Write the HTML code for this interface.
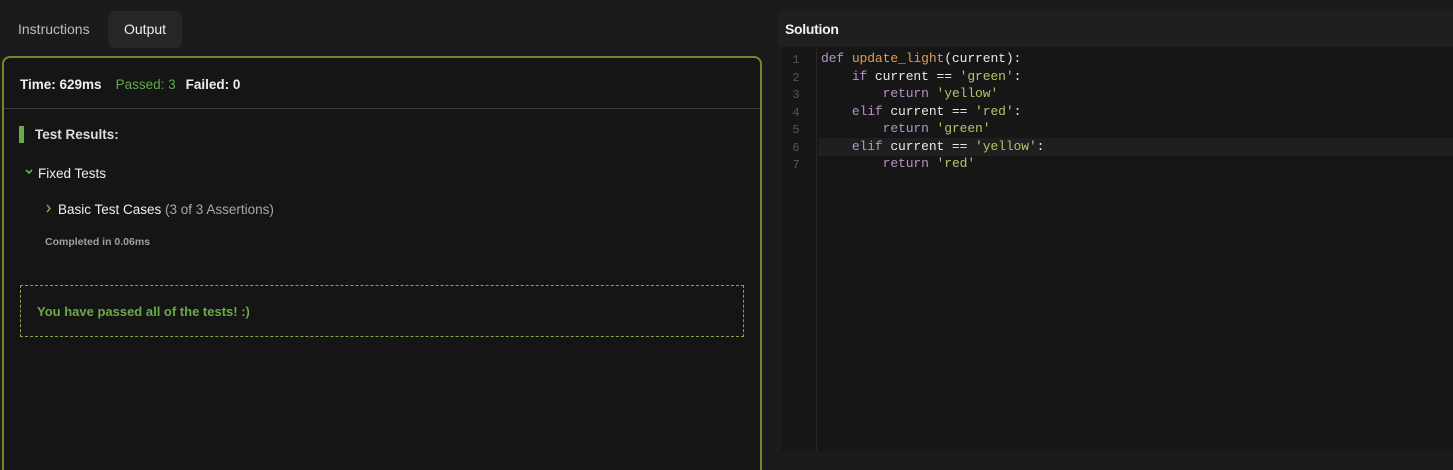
<!DOCTYPE html>
<html><head><meta charset="utf-8"><style>
*{box-sizing:border-box;margin:0;padding:0}
html{width:1453px;height:470px;overflow:hidden}
body{width:1453px;height:470px;background:#1b1b1d;font-family:"Liberation Sans",sans-serif;position:relative;overflow:hidden;color:#e6e6e6}
.tab{position:absolute;top:11px;height:37px;line-height:37px;font-size:14px;padding:0 16px;border-radius:6px}
#t1{left:2px;color:#bdbdbd}
#t2{left:108px;background:#262628;color:#eee}
#panel{position:absolute;left:2px;top:56px;width:760px;height:430px;background:#151515;border:2px solid #6d8b2c;border-radius:8px}
#stats{position:absolute;left:16px;top:19px;font-size:13.5px;font-weight:bold;color:#eee}
#stats .p{color:#5fa84a;font-weight:normal;margin:0 10px 0 14px}
#hr{position:absolute;left:0;right:0;top:50px;border-top:1px solid #3a3a3a}
#bar{position:absolute;left:15px;top:68px;width:5px;height:17px;background:#6aaa4b}
#tr{position:absolute;left:31px;top:69px;font-size:13.5px;font-weight:bold;color:#ddd}
#ft{position:absolute;left:34px;top:108px;font-size:13.5px;color:#eee}
svg.c{position:absolute}
#btc{position:absolute;left:54px;top:144px;font-size:13.5px;color:#eee}
#btc span{color:#a8a8a8;font-size:13.5px}
#comp{position:absolute;left:41px;top:178px;font-size:10.5px;font-weight:bold;color:#a0a0a0}
#pass{position:absolute;left:16px;top:227px;width:724px;height:52px;border:1px dashed #7fa64f;}
#pass div{position:absolute;left:16px;top:18px;font-size:13px;font-weight:bold;color:#6aaa4b}
#sol{position:absolute;left:778px;top:11px;width:675px;height:36px;background:#1f1f21;border-radius:6px 0 0 0;font-size:14px;font-weight:bold;line-height:36px;padding-left:7px;color:#f0f0f0;letter-spacing:-.3px}
#ed{position:absolute;left:781px;top:47px;width:672px;height:404px;background:#161616}
#gut{position:absolute;left:0;top:0;width:36px;height:100%;border-right:1px solid #262626}
.ln{position:absolute;left:0;width:30px;text-align:center;font:12px "Liberation Mono",monospace;color:#555}
.cl{position:absolute;left:40px;font:13px/17.5px "Liberation Mono",monospace;white-space:pre;color:#e8e8e8;letter-spacing:-.1px}
#hl{position:absolute;left:37px;right:0;top:91px;height:18px;background:#1f1f1f}
.k{color:#b693c9}.f{color:#e49a55}.s{color:#b6c468}
</style></head><body>
<div class="tab" id="t1">Instructions</div>
<div class="tab" id="t2">Output</div>
<div id="panel">
<div id="stats">Time: 629ms<span class="p">Passed: 3</span>Failed: 0</div>
<div id="hr"></div>
<div id="bar"></div><div id="tr">Test Results:</div>
<svg class="c" style="left:21px;top:111px" width="8" height="6" viewBox="0 0 8 6"><path d="M1 1L4 4L7 1" stroke="#6aaa4b" stroke-width="1.6" fill="none"/></svg>
<div id="ft">Fixed Tests</div>
<svg class="c" style="left:42px;top:146px" width="6" height="9" viewBox="0 0 6 9"><path d="M1 1L4 4.5L1 8" stroke="#6aaa4b" stroke-width="1.6" fill="none"/></svg>
<div id="btc">Basic Test Cases <span>(3 of 3 Assertions)</span></div>
<div id="comp">Completed in 0.06ms</div>
<div id="pass"><div>You have passed all of the tests! :)</div></div>
</div>
<div id="sol">Solution</div>
<div id="ed">
<div id="gut"></div>
<div id="hl"></div>
<div class="ln" style="top:6px">1</div>
<div class="ln" style="top:23.5px">2</div>
<div class="ln" style="top:41px">3</div>
<div class="ln" style="top:58.5px">4</div>
<div class="ln" style="top:76px">5</div>
<div class="ln" style="top:93.5px">6</div>
<div class="ln" style="top:111px">7</div>
<div class="cl" style="top:3px"><span class="k">def</span> <span class="f">update_light</span>(current):
    <span class="k">if</span> current == <span class="s">'green'</span>:
        <span class="k">return</span> <span class="s">'yellow'</span>
    <span class="k">elif</span> current == <span class="s">'red'</span>:
        <span class="k">return</span> <span class="s">'green'</span>
    <span class="k">elif</span> current == <span class="s">'yellow'</span>:
        <span class="k">return</span> <span class="s">'red'</span></div>
</div>
</body></html>
